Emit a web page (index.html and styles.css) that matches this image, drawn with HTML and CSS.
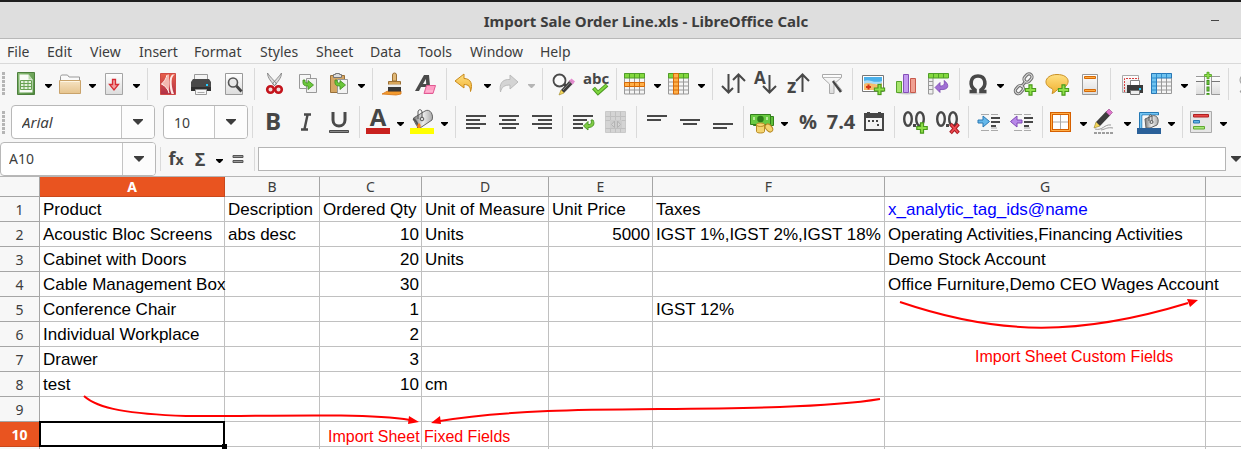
FILE: index.html
```html
<!DOCTYPE html>
<html lang="en">
<head>
<meta charset="utf-8">
<title>Import Sale Order Line.xls - LibreOffice Calc</title>
<link rel="stylesheet" href="styles.css">
</head>
<body>
<svg class="defs" aria-hidden="true">
  <defs>
    <linearGradient id="paper" x1="0" y1="0" x2="0" y2="1"><stop offset="0" stop-color="#fff"/><stop offset="1" stop-color="#dcdcdc"/></linearGradient>
    <linearGradient id="green" x1="0" y1="0" x2="1" y2="1"><stop offset="0" stop-color="#8cbf78"/><stop offset="1" stop-color="#4f8a3c"/></linearGradient>
    <linearGradient id="tan" x1="0" y1="0" x2="0" y2="1"><stop offset="0" stop-color="#f6e3c4"/><stop offset="1" stop-color="#e6c48e"/></linearGradient>
    <linearGradient id="red" x1="0" y1="0" x2="0" y2="1"><stop offset="0" stop-color="#e8604a"/><stop offset="1" stop-color="#b03048"/></linearGradient>
    <linearGradient id="gold" x1="0" y1="0" x2="0" y2="1"><stop offset="0" stop-color="#ffe082"/><stop offset="1" stop-color="#f0b030"/></linearGradient>
    <linearGradient id="steel" x1="0" y1="0" x2="1" y2="0"><stop offset="0" stop-color="#777"/><stop offset=".5" stop-color="#eee"/><stop offset="1" stop-color="#aaa"/></linearGradient>
    <symbol id="down" viewBox="0 0 7 4"><path d="M0 0h7v1L4 4H3L0 1z"/></symbol>
    <symbol id="plus" viewBox="0 0 12 12"><path d="M4.500.8h3v3.700h3.700v3H7.500v3.700h-3V7.500H.8v-3h3.700z" fill="#8fe04a" stroke="#4a9a1c" stroke-width="1.200"/></symbol>
    <symbol id="goarrow" viewBox="0 0 12 12"><path d="M1 1c-.5 5 1 6 5 6V10.500L11.500 6 6 1.500V4C3.500 4 3 3.500 3 1z" fill="#6ac83a" stroke="#3d8a1c" stroke-width=".8"/></symbol>
    <symbol id="caret" viewBox="0 0 10 6"><path d="M0 0h10v1L5 6 0 1z" fill="#3d3d3d"/></symbol>
  </defs>
</svg>
<div class="window">
  <header class="titlebar">
    <h1>Import Sale Order Line.xls - LibreOffice Calc</h1>
    <button class="minimize" aria-label="Minimize"><svg width="8" height="2"><path d="M0 0h8v1H0z" fill="#444"/></svg></button>
  </header>
  <nav class="menubar" aria-label="Menu">
    <button>File</button><button>Edit</button><button>View</button><button>Insert</button><button>Format</button><button>Styles</button><button>Sheet</button><button>Data</button><button>Tools</button><button>Window</button><button>Help</button>
  </nav>

  <div class="toolbar" role="toolbar" aria-label="Standard">
    <span class="grip"></span>
    <button class="tool split" aria-label="New"><svg viewBox="0 0 24 24"><path d="M3.500.5h17v22h-17z" fill="url(#green)" stroke="#4d7f3d"/><path d="M5.500 2.500h9l4 5v13h-13z" fill="#f8fbf6"/><path d="M14.500 2.500v5h4z" fill="#b9d9ac"/><path d="M6.500 8.500h11v9h-11zM6.500 11.500h11M6.500 14.500h11M10 8.500v9M14 8.500v9" fill="#e4f1dd" stroke="#69a253"/></svg></button><button class="drop" aria-label="New options"><svg><use href="#down"/></svg></button>
    <button class="tool split" aria-label="Open"><svg viewBox="0 0 24 24"><path d="M2.500 12V4.500l1-1.500h6l1.500 2h10.500V12z" fill="#fafafa" stroke="#999"/><path d="M1.500 8.500h21v13h-21z" fill="url(#tan)" stroke="#c9a36b"/><path d="M2.500 9.500h19" stroke="#fff6e4"/></svg></button><button class="drop" aria-label="Open options"><svg><use href="#down"/></svg></button>
    <button class="tool split" aria-label="Save"><svg viewBox="0 0 24 24"><path d="M3.500 1.500h17v21h-17z" fill="url(#paper)" stroke="#a5a5a5"/><path d="M10.500 7.500h3v5h3L12 18l-4.500-5.500h3z" fill="#f3a0a0" stroke="#d62c34" stroke-width="1.300"/></svg></button><button class="drop" aria-label="Save options"><svg><use href="#down"/></svg></button>
    <span class="sep"></span>
    <button class="tool" aria-label="Export as PDF"><svg viewBox="0 0 24 24"><path d="M4.500 1.500h15v21h-15z" fill="url(#red)" stroke="#cf4a45"/><path d="M11.500 2.500C10.500 7 8 10 5 12c4 1.500 7 5 8 10V2.500z" fill="#f4b8b0"/><path d="M11 3C10 7 8 10 5.500 12c4 2 6.500 5 7.500 9" fill="none" stroke="#fff0ec"/><path d="M19 2.500c-4 1-4.500 10-1 19.500h-2.500c-3-9-2.500-18 1-19.500z" fill="#ffe8e4"/></svg></button>
    <button class="tool" aria-label="Print"><svg viewBox="0 0 24 24"><path d="M5.500 2.500h13V10h-13z" fill="#f4f4f4" stroke="#999"/><path d="M4 7h16l2 3v9H2v-9z" fill="#4a4a4a"/><path d="M2 15h20v4H2z" fill="#303030"/><path d="M17 12h2v2h-2z" fill="#22cfff"/><path d="M6.500 17.500h11v5h-11z" fill="#f6f6f6" stroke="#999"/><path d="M8.500 20.500h7" stroke="#aaa"/></svg></button>
    <button class="tool" aria-label="Print Preview"><svg viewBox="0 0 24 24"><path d="M3.500 1.500h17v21h-17z" fill="url(#paper)" stroke="#9a9a9a"/><circle cx="11" cy="10.500" r="4.500" fill="#e8e8e8" stroke="#555" stroke-width="1.600"/><path d="M14.500 14l5 5.500" stroke="#444" stroke-width="2.800"/></svg></button>
    <span class="sep"></span>
    <button class="tool" aria-label="Cut"><svg viewBox="0 0 24 24"><path d="M4.500 1c0 5 4 9 7 12.500l2-1.500C11 8 7 5 4.500 1zM18.500 1c0 5-4 9-7 12.500L9.500 12C12 8 16 5 18.500 1z" fill="#ddd" stroke="#777" stroke-width=".8"/><circle cx="7.500" cy="17.500" r="3.300" fill="#eedddd" stroke="#c4141c" stroke-width="2.600"/><circle cx="15.500" cy="17.500" r="3.300" fill="#eedddd" stroke="#c4141c" stroke-width="2.600"/></svg></button>
    <button class="tool" aria-label="Copy"><svg viewBox="0 0 24 24"><path d="M3.500 2.500h11v14h-11z" fill="#f7f7f7" stroke="#999"/><path d="M10.500 6.500h10v14h-10z" fill="#f1f1f1" stroke="#999"/><use href="#goarrow" x="6" y="7" width="12" height="12"/></svg></button>
    <button class="tool split" aria-label="Paste"><svg viewBox="0 0 24 24"><path d="M3.500 3.500h14v17h-14z" fill="#d5a664" stroke="#98703a"/><path d="M6.500 5.500h8v-3h-2v-1h-4v1h-2z" fill="#ddd" stroke="#777"/><path d="M10.500 7.500h10v14h-10z" fill="#f3f3f3" stroke="#999"/><use href="#goarrow" x="7" y="7" width="12" height="12"/></svg></button><button class="drop" aria-label="Paste options"><svg><use href="#down"/></svg></button>
    <span class="sep"></span>
    <button class="tool" aria-label="Clone Formatting"><svg viewBox="0 0 24 24"><path d="M1 22c3-1 4-3 7-3h12v3l-5 1z" fill="#f39a2e" stroke="#d47414" stroke-width=".8"/><path d="M11.500 9V3a2 2 0 0 1 4 0v6z" fill="#e0b878" stroke="#9c7034"/><path d="M7.500 9.500h12V13h-12z" fill="#d9a75c" stroke="#9c7034"/><path d="M7 12.500h13v3H7z" fill="#eee"/><path d="M7 15h13v4.500H7z" fill="#383838"/></svg></button>
    <button class="tool" aria-label="Clear Formatting"><svg viewBox="0 0 24 24"><path d="M1 19L10 3h5l1.500 16h-4l-.3-4H7L5 19zM9 12h3.200l-.3-5z" fill="#4a4a4a" fill-rule="evenodd"/><path d="M12.500 13.500h9l-2.500 8h-9z" fill="#ff9cc4" stroke="#e05a92"/><path d="M12 19h7" stroke="#ffc6dd"/></svg></button>
    <span class="sep"></span>
    <button class="tool split" aria-label="Undo"><svg viewBox="0 0 24 24"><path d="M2 9l9-7v4.500c7 0 9 6 6.500 13 0-5-2-7-6.500-7V16z" fill="url(#gold)" stroke="#c98a1c" stroke-linejoin="round"/></svg></button><button class="drop" aria-label="Undo options"><svg><use href="#down"/></svg></button>
    <button class="tool split" aria-label="Redo" disabled><svg viewBox="0 0 24 24"><path d="M21 10l-8-7v4.500C5 7 2 12 3.500 20c1-5 4-7 9.500-7v4z" fill="#d4d4d4" stroke="#bbb" stroke-linejoin="round"/></svg></button><button class="drop off" aria-label="Redo options" disabled><svg><use href="#down"/></svg></button>
    <span class="sep"></span>
    <button class="tool" aria-label="Find and Replace"><svg viewBox="0 0 24 24"><circle cx="8.500" cy="8.500" r="6" fill="#fafafa" stroke="#4a4a4a" stroke-width="1.800"/><path d="M13 12l3 3" stroke="#444" stroke-width="3"/><path d="M10 18L19 8l3.500 3L13 21z" fill="#3d3d3d"/><path d="M10 18l3 3-5 2z" fill="#f5d65a" stroke="#9b8628" stroke-width=".6"/><path d="M18 9l2.500-2.500 3.500 3-2.500 3z" fill="#e58bd0"/><path d="M12 18l8-8.500" stroke="#888"/></svg></button>
    <button class="tool" aria-label="Spelling"><svg viewBox="0 0 24 24"><text x="12" y="12" text-anchor="middle" class="glyph abc">abc</text><path d="M9.500 16l4.500 5 9-8" fill="none" stroke="#4c9a22" stroke-width="4"/><path d="M10 16.300l4 4.500 8.500-7.500" fill="none" stroke="#80d840" stroke-width="2"/></svg></button>
    <span class="sep"></span>
    <button class="tool split" aria-label="Row"><svg viewBox="0 0 24 24"><path d="M1.500 1.500h20v20.500h-20zM1.500 14h20M1.500 18h20M6.500 1.500V22M11.500 1.500V22M16.500 1.500V22" fill="#f5f5f5" stroke="#999"/><path d="M1.500 1.500h20v4.500h-20zM6.500 1.500V6M11.500 1.500V6M16.500 1.500V6" fill="#83d83e" stroke="#4f9e28"/><path d="M1.500 10.500h20v4h-20zM6.500 10.500v4M11.500 10.500v4M16.500 10.500v4" fill="#ffb04a" stroke="#d66a08"/></svg></button><button class="drop" aria-label="Row options"><svg><use href="#down"/></svg></button>
    <button class="tool split" aria-label="Column"><svg viewBox="0 0 24 24"><path d="M1.500 1.500h20v20.500h-20zM1.500 10h20M1.500 14h20M1.500 18h20M6.500 1.500V22M11.500 1.500V22M16.500 1.500V22" fill="#f5f5f5" stroke="#999"/><path d="M1.500 1.500h20v4.500h-20zM6.500 1.500V6M11.500 1.500V6M16.500 1.500V6" fill="#83d83e" stroke="#4f9e28"/><path d="M6.500 1.500h5v20.500h-5zM6.500 6h5M6.500 10h5M6.500 14h5M6.500 18h5" fill="#ffb04a" stroke="#d66a08"/></svg></button><button class="drop" aria-label="Column options"><svg><use href="#down"/></svg></button>
    <span class="sep"></span>
    <button class="tool" aria-label="Sort"><svg viewBox="0 0 24 24" class="line"><path d="M7.500 2v18M1 14l6.500 6.500L12 16M17.500 21V3M12 8l5.500-5.500L24 9"/></svg></button>
    <button class="tool" aria-label="Sort Ascending"><svg viewBox="0 0 24 24"><text x="0" y="12" class="glyph">A</text><path class="stroke" d="M15.500 3v17M9 14l6.500 6.500L22 14"/></svg></button>
    <button class="tool" aria-label="Sort Descending"><svg viewBox="0 0 24 24"><text x="0" y="21" class="glyph zed">z</text><path class="stroke" d="M15.500 20V3M9 9l6.500-6.500L22 9"/></svg></button>
    <button class="tool" aria-label="AutoFilter"><svg viewBox="0 0 24 24"><path d="M2.500 2.500h19v3L14 12v9.500H9.500V12l-7-6.500z" fill="url(#paper)" stroke="#aaa"/><path d="M2.500 5.500h19" stroke="#bbb"/><path d="M13 9l8 11" stroke="#444" stroke-width="2.600"/><path d="M14 8.500l8 10" stroke="#aaa"/></svg></button>
    <span class="sep"></span>
    <button class="tool" aria-label="Insert Image"><svg viewBox="0 0 24 24"><path d="M1.500 3.500h21v16h-21z" fill="#fff" stroke="#777"/><path d="M3 5h18v7H3z" fill="#4bb0ea"/><path d="M3 9c5-3 9 3 18 0v3H3z" fill="#a8dcf8"/><path d="M3 12c6-3 12 3 18-1v7H3z" fill="#f6bd6c"/><path d="M5 15h5M7.500 12.500v5" stroke="#d43518" stroke-width="2"/><use href="#plus" x="12.500" y="11.500" width="12" height="12"/></svg></button>
    <button class="tool" aria-label="Insert Chart"><svg viewBox="0 0 24 24"><ellipse cx="13" cy="21" rx="10" ry="1.500" fill="#ccc"/><path d="M2.500 9.500h5v11h-5z" fill="#a6e46c" stroke="#57a32c"/><path d="M9.500 2.500h5v18h-5z" fill="#c49af0" stroke="#8450b8"/><path d="M16.500 6.500h5v14h-5z" fill="#f0a092" stroke="#c75a4c"/></svg></button>
    <button class="tool" aria-label="Pivot Table"><svg viewBox="0 0 24 24"><path d="M1.500 5.500h4.500V22H1.500zM1.500 9.500h4.500M1.500 13.500h4.500M1.500 17.500h4.500" fill="#eee" stroke="#999"/><path d="M1.500 1.500h20v4.500h-20zM6.500 1.500V6M11.500 1.500V6M16.500 1.500V6" fill="#83d83e" stroke="#4f9e28"/><path d="M8 15.500l5-5v3.500c4 0 5-2 4-5.500 6 4 5 10-4 9v3z" fill="#a070d4" stroke="#7a46b0" stroke-width=".8"/></svg></button>
    <span class="sep"></span>
    <button class="tool split" aria-label="Special Character"><svg viewBox="0 0 24 24"><ellipse cx="12" cy="21.500" rx="9" ry="1.500" fill="#ddd"/><path d="M3.500 19.500h5.500v-1.500C3 14 4 4 12 4s9 10 3 14v1.500h5.500" fill="none" stroke="#484848" stroke-width="3.600"/></svg></button><button class="drop" aria-label="Special Character options"><svg><use href="#down"/></svg></button>
    <button class="tool" aria-label="Insert Hyperlink"><svg viewBox="0 0 24 24"><g fill="none" stroke="#707070" stroke-width="3.200"><rect x="11.500" y="3" width="9" height="6" rx="3" transform="rotate(-48 16 6)"/><rect x="3" y="15" width="9" height="6" rx="3" transform="rotate(-48 7 18)"/><path d="M8.500 15.500l6-7"/></g><g fill="none" stroke="#ddd"><rect x="11.500" y="3" width="9" height="6" rx="3" transform="rotate(-48 16 6)"/><rect x="3" y="15" width="9" height="6" rx="3" transform="rotate(-48 7 18)"/><path d="M8.500 15.500l6-7"/></g><use href="#plus" x="12.500" y="12" width="12" height="12"/></svg></button>
    <button class="tool" aria-label="Insert Comment"><svg viewBox="0 0 24 24"><path d="M12 2.500c15 0 14 13 2 14.500-2 0-4 4-7 4.500 1-2 1-4 0-5C-3 13 0 2.500 12 2.500z" fill="url(#gold)" stroke="#c99026"/><use href="#plus" x="12.500" y="12" width="12" height="12"/></svg></button>
    <button class="tool" aria-label="Headers and Footers"><svg viewBox="0 0 24 24"><path d="M4.500 2.500h15v20h-15z" fill="url(#paper)" stroke="#999"/><path d="M6.500 4.500h11v2h-11zM6.500 17.500h11v2h-11z" fill="#ffad42" stroke="#d66a08"/></svg></button>
    <span class="sep"></span>
    <button class="tool" aria-label="Define Print Area"><svg viewBox="0 0 24 24"><path d="M3.500 3.500h16v17h-16z" fill="url(#paper)" stroke="#aaa"/><path d="M5.500 20V6.500H20" fill="none" stroke="#d94040" stroke-dasharray="2 1"/><path d="M11.500 8.500h9V14h-9z" fill="#fff" stroke="#888"/><path d="M8 13h16v8H8z" fill="#3b3b3b"/><path d="M20 16h2v2h-2z" fill="#22cfff"/><path d="M11.500 18.500h9v4h-9z" fill="#eee" stroke="#777"/></svg></button>
    <button class="tool split" aria-label="Freeze Rows and Columns"><svg viewBox="0 0 24 24"><path d="M1.500 1.500h20v20h-20zM1.500 10h20M1.500 14h20M1.500 18h20M6.500 1.500v20M11.500 1.500v20M16.500 1.500v20" fill="#f5f5f5" stroke="#999"/><path d="M1.500 1.500h20V6h-15v15.500h-5z" fill="#6fc3f0" stroke="#2878b8"/><path d="M6.500 1.500V6h-5M11.500 1.500V6M16.500 1.500V6M1.500 10h5M1.500 14h5M1.500 18h5" fill="none" stroke="#2f8dcb"/></svg></button><button class="drop" aria-label="Freeze options"><svg><use href="#down"/></svg></button>
    <button class="tool" aria-label="Split Window"><svg viewBox="0 0 24 24"><path d="M0 4.500h8.500v18H0M24 4.500h-8.500v18H24" fill="url(#paper)" stroke="#999"/><path d="M0 9.500h8.500M15.500 9.500H24" stroke="#777"/><path d="M12 8v15" stroke="#3f8d20" stroke-width="3" stroke-dasharray="5 1.500"/><path d="M12 9v14" stroke="#80dc44" stroke-dasharray="3 3.500"/><use href="#plus" x="8" y="-.5" width="8" height="8"/></svg></button>
    <span class="sep"></span>
    <button class="tool" aria-label="Show Draw Functions"><svg viewBox="0 0 24 24"><circle cx="9" cy="8" r="6" fill="#eee" stroke="#999"/><path d="M3 20l4-6 5 7z" fill="#eee" stroke="#999"/></svg></button>
  </div>

  <div class="toolbar format" role="toolbar" aria-label="Formatting">
    <span class="grip"></span>
    <div class="combo font"><input aria-label="Font Name" value="Arial"><button aria-label="Show fonts"><svg><use href="#caret"/></svg></button></div>
    <div class="combo size"><input aria-label="Font Size" value="10"><button aria-label="Show sizes"><svg><use href="#caret"/></svg></button></div>
    <span class="sep"></span>
    <button class="tool" aria-label="Bold"><svg viewBox="0 0 24 24"><text x="12" y="20" text-anchor="middle" class="glyph letter">B</text></svg></button>
    <button class="tool" aria-label="Italic"><svg viewBox="0 0 24 24"><path d="M10 4.500h7M7 19.500h7M13.500 5l-3 14" fill="none" stroke="#4a4a4a" stroke-width="2.400"/></svg></button>
    <button class="tool" aria-label="Underline"><svg viewBox="0 0 24 24"><path d="M6 2v8c0 8 12 8 12 0V2" fill="none" stroke="#4a4a4a" stroke-width="3"/><path d="M2.500 20.500h19v2h-19z" fill="#888" stroke="#4a4a4a"/></svg></button>
    <span class="sep"></span>
    <button class="tool split" aria-label="Font Color"><svg viewBox="0 0 24 24"><text x="12" y="16" text-anchor="middle" class="glyph letter">A</text><path d="M0 18h24v6H0z" fill="#c9211e"/></svg></button><button class="drop" aria-label="Font Color options"><svg><use href="#down"/></svg></button>
    <button class="tool split" aria-label="Background Color"><svg viewBox="0 0 24 24"><path d="M3.500 8L15 1c5-3 9 4 7 9L10 18c-3-1-6-6-6.500-10z" fill="url(#steel)" stroke="#666"/><path d="M3 9c3 1 5 5 5 9" fill="none" stroke="#555" stroke-width="2"/><path d="M8 9V2c0-3 4-3 4 0v6" fill="none" stroke="#555"/><circle cx="12" cy="9" r="1.800" fill="#ddd" stroke="#555"/><path d="M8 18c-2-2 0-4 1-5 2 2 2 3 1 5z" fill="#f4841e"/><path d="M0 18h24v6H0z" fill="#ff0"/></svg></button><button class="drop" aria-label="Background Color options"><svg><use href="#down"/></svg></button>
    <span class="sep"></span>
    <button class="tool" aria-label="Align Left"><svg viewBox="0 0 24 24" class="line"><path d="M2 6h20M2 10h14M2 14h20M2 18h14"/></svg></button>
    <button class="tool" aria-label="Center Horizontally"><svg viewBox="0 0 24 24" class="line"><path d="M2 6h20M5 10h14M2 14h20M5 18h14"/></svg></button>
    <button class="tool" aria-label="Align Right"><svg viewBox="0 0 24 24" class="line"><path d="M2 6h20M8 10h14M2 14h20M8 18h14"/></svg></button>
    <span class="sep"></span>
    <button class="tool" aria-label="Wrap Text"><svg viewBox="0 0 24 24" class="line"><path d="M2 6h20M2 10h14M2 14h10M2 18h10"/><path class="wrap" d="M20 10c1 3 0 5-3 4.500V11.500L12.500 16l4.500 4v-2.500c6 0 7-4 5-7.500z"/></svg></button>
    <button class="tool" aria-label="Merge Cells" disabled><svg viewBox="0 0 24 24"><path d="M1.500 1.500h20v21h-20z" fill="#d4d4d4" stroke="#cacaca"/><path d="M1.500 6.500h20M1.500 10.500h20M1.500 18.500h20M6.500 1.500v21M11.500 1.500v21M16.500 1.500v21" stroke="#c0c0c0"/><path d="M6 10h12v8H6z" fill="#ccc"/><path d="M10.500 11l-3 3.500 3 3zM13.500 11l3 3.500-3 3z" fill="#d4d4d4" stroke="#b4b4b4"/></svg></button>
    <span class="sep"></span>
    <button class="tool" aria-label="Align Top"><svg viewBox="0 0 24 24" class="line"><path d="M2 6h20M2 10h14"/></svg></button>
    <button class="tool" aria-label="Center Vertically"><svg viewBox="0 0 24 24" class="line"><path d="M2 10h20M5 14h14"/></svg></button>
    <button class="tool" aria-label="Align Bottom"><svg viewBox="0 0 24 24" class="line"><path d="M2 14h20M2 18h14"/></svg></button>
    <span class="sep"></span>
    <button class="tool split" aria-label="Format as Currency"><svg viewBox="0 0 24 24"><path d="M3.500 6.500h20v9h-20z" fill="#5fbf3a" stroke="#33801c"/><path d="M.5 4.500h20v10H.5z" fill="#69ca42" stroke="#33801c"/><circle cx="10.500" cy="9" r="3.300" fill="#2d7d18"/><path d="M3 7h2v3H3zM16 7h2v3h-2z" fill="#b8ea9a"/><path d="M6.500 14.500v7c0 2 8 2 8 0v-7c0-2-8-2-8 0zM6.500 15c1 2 7 2 8 0" fill="#f5d470" stroke="#b88a24"/><ellipse cx="19" cy="18" rx="4.500" ry="3" transform="rotate(50 19 18)" fill="#f5d470" stroke="#b88a24"/></svg></button><button class="drop" aria-label="Currency options"><svg><use href="#down"/></svg></button>
    <button class="tool" aria-label="Format as Percent"><svg viewBox="0 0 24 24"><text x="12" y="19" text-anchor="middle" class="glyph num">%</text></svg></button>
    <button class="tool" aria-label="Format as Number"><svg viewBox="0 0 24 24"><text x="12" y="19" text-anchor="middle" class="glyph num">7.4</text></svg></button>
    <button class="tool" aria-label="Format as Date"><svg viewBox="0 0 24 24"><path d="M3 4h18v16H3z" fill="#f4f4f4" stroke="#464646" stroke-width="2"/><path d="M2 3h3V2h3v1h8V2h3v1h3v5H2z" fill="#464646"/><path d="M6 11h12M15 15h3" stroke="#464646" stroke-width="2" stroke-dasharray="2 2"/></svg></button>
    <span class="sep"></span>
    <button class="tool" aria-label="Add Decimal Place"><svg viewBox="0 0 24 24"><g fill="none" stroke="#484848" stroke-width="2.400"><ellipse cx="5" cy="9" rx="3.800" ry="6.800"/><ellipse cx="17" cy="9" rx="3.800" ry="6.800"/></g><path d="M10 14h3v3h-3z" fill="#484848"/><use href="#plus" x="13" y="12" width="12" height="12"/></svg></button>
    <button class="tool" aria-label="Delete Decimal Place"><svg viewBox="0 0 24 24"><g fill="none" stroke="#484848" stroke-width="2.400"><ellipse cx="5" cy="9" rx="3.800" ry="6.800"/><ellipse cx="17" cy="9" rx="3.800" ry="6.800"/></g><path d="M10 14h3v3h-3z" fill="#484848"/><path d="M14.500 14l8 9M22.500 14l-8 9" stroke="#a81820" stroke-width="3.600"/><path d="M15 14.500l7 8M22 14.500l-7 8" stroke="#ee4a50" stroke-width="1.800"/></svg></button>
    <span class="sep"></span>
    <button class="tool" aria-label="Increase Indent"><svg viewBox="0 0 24 24"><path d="M4 4.500h8M14 4.500h7M4 20.500h8M14 20.500h7M14 18h6" stroke="#aaa"/><path d="M14 8h9M14 12h9M14 16h5" stroke="#484848" stroke-width="2"/><path d="M1 10h5V6l6.500 5.500L6 17v-4H1z" fill="#66b8ea" stroke="#2a78b4"/></svg></button>
    <button class="tool" aria-label="Decrease Indent"><svg viewBox="0 0 24 24"><path d="M4 4.500h8M14 4.500h7M4 20.500h8M14 20.500h7M14 18h6" stroke="#aaa"/><path d="M14 8h9M14 12h9M14 16h5" stroke="#484848" stroke-width="2"/><path d="M12 10H7V6L.5 11.500 7 17v-4h5z" fill="#b888e8" stroke="#8048b8"/></svg></button>
    <span class="sep"></span>
    <button class="tool split" aria-label="Borders"><svg viewBox="0 0 24 24"><path d="M2.500 3.500h18v17h-18z" fill="#fff" stroke="#d66000" stroke-width="3"/><path d="M2.500 3.500h18v17h-18z" fill="none" stroke="#ffae48"/><path d="M11.500 5v14M4 12h15" stroke="#aaa"/></svg></button><button class="drop" aria-label="Border options"><svg><use href="#down"/></svg></button>
    <button class="tool split" aria-label="Border Style"><svg viewBox="0 0 24 24"><path d="M3 12L13.500 1l4 4L7 16z" fill="#3d3d3d"/><path d="M3 12l4 4-6 2z" fill="#f5d65a" stroke="#90802c" stroke-width=".6"/><path d="M13 2l3-3 3.500 3.500-3 3z" fill="#df76cc" stroke="#954488" stroke-width=".6"/><path d="M2 19c8 2 9-5 16-4M8 20c5-1 6-3 12-2" fill="none" stroke="#999"/><path d="M1 23h20" stroke="#444" stroke-dasharray="3 1"/></svg></button><button class="drop" aria-label="Border Style options"><svg><use href="#down"/></svg></button>
    <button class="tool split" aria-label="Border Color"><svg viewBox="0 0 24 24"><path d="M2.500 18V2.500h19v2.500H5v13" fill="#74c6f4" stroke="#2478b4"/><path d="M5.500 5.500h16V18h-16z" fill="#f7f7f7"/><path d="M8 9l7-3c5-2 8 4 5 9l-7 3H9z" fill="url(#steel)" stroke="#666"/><path d="M12 11V7c0-3 3-3 3 0v4" fill="none" stroke="#555"/><circle cx="14.500" cy="12" r="1.500" fill="#ddd" stroke="#555"/><path d="M0 18h24v6H0z" fill="#2a6099"/></svg></button><button class="drop" aria-label="Border Color options"><svg><use href="#down"/></svg></button>
    <span class="sep"></span>
    <button class="tool split" aria-label="Conditional Formatting"><svg viewBox="0 0 24 24"><path d="M1.500 1.500h21v21h-21z" fill="#e6e6e6" stroke="#aaa"/><path d="M4.500 4.500h15v2.500h-15z" fill="#e84848" stroke="#b02020"/><path d="M4.500 10.500h6V13h-6z" fill="#60b4e8" stroke="#2876b0"/><path d="M4.500 16.500h11V19h-11z" fill="#a8e878" stroke="#60a830"/></svg></button><button class="drop" aria-label="Conditional Formatting options"><svg><use href="#down"/></svg></button>
  </div>

  <div class="formulabar">
    <div class="combo name"><input aria-label="Name Box" value="A10"><button aria-label="Show names"><svg><use href="#caret"/></svg></button></div>
    <span class="sep"></span>
    <button class="fn" aria-label="Function Wizard">f<small>x</small></button>
    <button class="fn" aria-label="Select Function">Σ</button><button class="drop" aria-label="Function options"><svg><use href="#down"/></svg></button>
    <button class="fn equal" aria-label="Formula"><svg width="12" height="10"><path d="M1 1.500h10v2H1zM1 6.500h10v2H1z" fill="#999" stroke="#555"/></svg></button>
    <span class="sep"></span>
    <input class="formula" aria-label="Input line">
    <button class="expand" aria-label="Expand Formula Bar"><svg><use href="#caret"/></svg></button>
  </div>

  <main class="sheet">
    <table>
      <colgroup><col class="rh"><col class="a"><col class="b"><col class="c"><col class="d"><col class="e"><col class="f"><col class="g"><col></colgroup>
      <thead><tr><th></th><th class="on">A</th><th>B</th><th>C</th><th>D</th><th>E</th><th>F</th><th>G</th><th></th></tr></thead>
      <tbody>
        <tr><th>1</th><td>Product</td><td>Description</td><td>Ordered Qty</td><td>Unit of Measure</td><td>Unit Price</td><td>Taxes</td><td class="blue">x_analytic_tag_ids@name</td><td></td></tr>
        <tr><th>2</th><td>Acoustic Bloc Screens</td><td>abs desc</td><td class="n">10</td><td>Units</td><td class="n">5000</td><td>IGST 1%,IGST 2%,IGST 18%</td><td>Operating Activities,Financing Activities</td><td></td></tr>
        <tr><th>3</th><td>Cabinet with Doors</td><td></td><td class="n">20</td><td>Units</td><td></td><td></td><td>Demo Stock Account</td><td></td></tr>
        <tr><th>4</th><td>Cable Management Box</td><td></td><td class="n">30</td><td></td><td></td><td></td><td>Office Furniture,Demo CEO Wages Account</td><td></td></tr>
        <tr><th>5</th><td>Conference Chair</td><td></td><td class="n">1</td><td></td><td></td><td>IGST 12%</td><td></td><td></td></tr>
        <tr><th>6</th><td>Individual Workplace</td><td></td><td class="n">2</td><td></td><td></td><td></td><td></td><td></td></tr>
        <tr><th>7</th><td>Drawer</td><td></td><td class="n">3</td><td></td><td></td><td></td><td></td><td></td></tr>
        <tr><th>8</th><td>test</td><td></td><td class="n">10</td><td>cm</td><td></td><td></td><td></td><td></td></tr>
        <tr><th>9</th><td></td><td></td><td></td><td></td><td></td><td></td><td></td><td></td></tr>
        <tr><th class="on">10</th><td class="cursor"></td><td></td><td></td><td></td><td></td><td></td><td></td><td></td></tr>
        <tr><th></th><td></td><td></td><td></td><td></td><td></td><td></td><td></td><td></td></tr>
      </tbody>
    </table>
    <svg class="arrows" width="1241" height="273" viewBox="0 176 1241 273" aria-hidden="true">
      <g fill="none" stroke="#f00" stroke-width="2"><path d="M84 396C98 409 130 414 186 416C250 417 360 412 410 420"/><path d="M880 399C800 412 640 407 548 411Q480 414 440 421"/><path d="M900 302C1000 336 1080 336 1188 303"/></g>
      <path d="M419 422l-10-6-1 8zM431 423l9-7 1 8zM1198 300l-11-1 3 8z" fill="#f00"/>
    </svg>
    <p class="note fixed">Import Sheet Fixed Fields</p>
    <p class="note custom">Import Sheet Custom Fields</p>
  </main>
</div>
</body>
</html>
```
FILE: styles.css
```css
* { box-sizing: border-box; }
body { margin: 0; background: #f7f7f7; color: #3d3d3d; font: 14px "Noto Sans", "Open Sans", sans-serif; }
button { margin: 0; padding: 0; border: 0; background: none; color: inherit; font: inherit; flex: none; }
input { color: inherit; font: inherit; outline: 0; }
svg { display: block; overflow: visible; flex: none; }
.defs { position: absolute; width: 0; height: 0; }
.window { display: flex; flex-direction: column; height: 100vh; overflow: hidden; }

.titlebar { flex: none; display: flex; align-items: center; height: 39px; padding: 2px 22px 0 81px; border-top: 2px solid #1e1e1e; border-bottom: 1px solid #b8b8b8; background: #dedede; }
.titlebar h1 { flex: 1; margin: 0; text-align: center; font-size: 15px; font-weight: 700; line-height: 20px; }
.minimize { padding: 4px 0; }

.menubar { flex: none; display: grid; grid-template-columns: 40px 43px 49px 55px 66px 56px 54px 48px 52px 70px auto; height: 25px; padding: 1px 0 0 7px; border-bottom: 1px solid #d9d9d9; }
.menubar button { text-align: left; line-height: 24px; }

.toolbar { flex: none; display: flex; align-items: center; height: 39px; overflow: hidden; }
.format { height: 38px; }
.grip { flex: none; width: 3px; height: 23px; margin: 0 6px 0 2px; background: repeating-linear-gradient(#b5b5b5 0 3px, transparent 3px 4px); }
.tool { width: 33px; height: 32px; padding-left: 5px; }
.tool.split { width: 30px; padding-left: 3px; }
.tool svg { width: 24px; height: 24px; }
.drop { display: flex; justify-content: center; width: 14px; padding-top: 4px; }
.drop svg { width: 7px; height: 4px; fill: #000; }
.drop.off svg { fill: #b5b5b5; }
.sep { flex: none; width: 8px; height: 32px; background: linear-gradient(#dadada, #dadada) 4px 0 / 1px 100% no-repeat; }
.glyph { fill: #464646; stroke: #464646; stroke-width: 0; font: 700 17px "Open Sans", sans-serif; }
.abc { font-size: 15px; }
.zed { font-size: 19px; }
.letter { font-size: 24px; }
.num { font-size: 20px; }
.line, .stroke { fill: none; stroke: #484848; stroke-width: 2; }
.wrap { fill: #80cc44; stroke: #4c9a28; stroke-width: 1; }

.combo { flex: none; display: flex; height: 34px; border: 1px solid #b8b8b8; border-radius: 4px; background: #fff; overflow: hidden; }
.combo input { flex: 1; min-width: 0; padding: 0 10px; border: 0; background: none; }
.combo button { display: flex; align-items: center; justify-content: center; width: 33px; border-left: 1px solid #c4c4c4; background: #fcfcfc; }
.combo svg, .expand svg { width: 10px; height: 6px; }
.font { width: 144px; margin-right: 8px; }
.font input { font-size: 15px; font-style: italic; }
.size { width: 85px; }
.name { width: 156px; }
.combo.name input { padding: 0 8px; }

.formulabar { flex: none; display: flex; align-items: center; height: 35px; }
.formulabar .sep { height: 24px; }
.fn { width: 24px; font: 700 18px/24px "Open Sans", sans-serif; color: #464646; }
.fn small { font-size: 14px; }
.equal { display: flex; justify-content: center; }
.formula { flex: 1; min-width: 0; height: 24px; padding: 0 4px; border: 1px solid #b5b5b5; background: #fff; }
.expand { display: flex; justify-content: flex-end; width: 15px; }

.sheet { position: relative; flex: 1; min-height: 0; overflow: hidden; border-top: 1px solid #b5b5b5; background: #fff; }
table { width: 100%; table-layout: fixed; border-collapse: separate; border-spacing: 0; }
.rh { width: 40px; }
.a { width: 185px; }
.b { width: 95px; }
.c { width: 102px; }
.d { width: 127px; }
.e { width: 104px; }
.f { width: 232px; }
.g { width: 321px; }
th { height: 25px; padding: 2px 0 0; border: solid #a5a5a5; border-width: 0 1px 1px 0; background: #f7f7f7; font-size: 14px; font-weight: 400; line-height: 22px; }
thead th { height: 20px; padding: 1px 0 0; line-height: 18px; }
th.on { background: #e95420; border-color: #c9481c; color: #fff; font-weight: 700; }
td { height: 25px; padding: 2px 2px 0 3px; border: solid #c0c0c0; border-width: 0 1px 1px 0; color: #000; font: 17px/22px "Liberation Sans", Arial, sans-serif; white-space: nowrap; }
th:last-child, td:last-child { border-right: 0; }
.n { text-align: right; }
.blue { color: #00f; }
.cursor { position: relative; }
.cursor::before { content: ""; position: absolute; inset: -1px; border: 2px solid #000; }
.cursor::after { content: ""; position: absolute; right: -3px; bottom: -3px; width: 5px; height: 5px; background: #000; }
.arrows { position: absolute; left: 0; top: -1px; }
.note { position: absolute; margin: 0; color: #f00; font: 16px/20px "Liberation Sans", Arial, sans-serif; }
.fixed { left: 328px; top: 250px; }
.custom { left: 975px; top: 170px; }
```
